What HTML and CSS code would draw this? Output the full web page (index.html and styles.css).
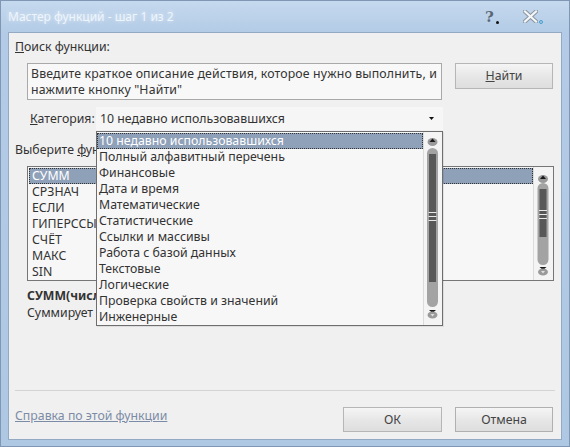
FILE: index.html
```html
<!DOCTYPE html>
<html lang="ru">
<head>
<meta charset="utf-8">
<title>Мастер функций - шаг 1 из 2</title>
<link rel="stylesheet" href="styles.css">
</head>
<body>
<div class="window">
  <div class="titlebar">
    <span class="title">Мастер функций - шаг 1 из 2</span>
    <span class="tb-help">?<i class="dot dot-dark"></i></span>
    <span class="tb-close">
      <svg width="15" height="13" viewBox="0 0 15 13"><path d="M2 1.5 L13 11.5 M13 1.5 L2 11.5" stroke="#8a96a3" stroke-width="4.2" stroke-linecap="square"/><path d="M2 1.5 L13 11.5 M13 1.5 L2 11.5" stroke="#f4f6f8" stroke-width="2.2" stroke-linecap="square"/></svg>
      <i class="dot dot-blue"></i>
    </span>
  </div>
  <div class="client">
    <div class="label"><u>П</u>оиск функции:</div>
    <div class="search-row">
      <div class="textbox">Введите краткое описание действия, которое нужно выполнить, и нажмите кнопку "Найти"</div>
      <div class="btn btn-find"><u>Н</u>айти</div>
    </div>
    <div class="cat-row">
      <span class="cat-label"><u>К</u>атегория:</span>
      <div class="combo">
        <span>10 недавно использовавшихся</span>
        <svg class="combo-arrow" width="5" height="3" viewBox="0 0 5 3"><path d="M0 0 H5 L2.5 3 Z" fill="#111"/></svg>
      </div>
    </div>
    <div class="label label-select">Выберите <u>ф</u>ункцию:</div>
    <div class="listbox funclist">
      <div class="items">
        <div class="item sel">СУММ</div>
        <div class="item">СРЗНАЧ</div>
        <div class="item">ЕСЛИ</div>
        <div class="item">ГИПЕРССЫЛКА</div>
        <div class="item">СЧЁТ</div>
        <div class="item">МАКС</div>
        <div class="item">SIN</div>
      </div>
      <svg class="vscroll" width="20" height="113" viewBox="0 0 20 113">
        <rect x="0" y="0" width="20" height="113" fill="#f4f4f4"/>
        <line x1="0.5" y1="0" x2="0.5" y2="113" stroke="#dcdcdc"/>
        <ellipse cx="10" cy="12" rx="5" ry="4" fill="#9a9a9a"/>
        <path d="M7 12 H13 L10 8.5 Z" fill="#1a1a1a"/>
        <rect x="4.5" y="16" width="11" height="82" rx="5.5" fill="#a3a3a3"/>
        <rect x="6.5" y="22" width="7" height="48" fill="#585858"/>
        <line x1="6" y1="43.5" x2="14" y2="43.5" stroke="#e8e8e8"/>
        <line x1="6" y1="47.5" x2="14" y2="47.5" stroke="#e8e8e8"/>
        <line x1="6" y1="51.5" x2="14" y2="51.5" stroke="#e8e8e8"/>
        <path d="M6.5 100 H13.5 L10 103 Z" fill="#1a1a1a"/>
        <ellipse cx="10" cy="105" rx="5" ry="3.5" fill="#9a9a9a"/>
        <path d="M8 104 H12 L10 106.5 Z" fill="#e0e0e0"/>
      </svg>
    </div>
    <div class="sig">СУММ(число1;число2;...)</div>
    <div class="desc">Суммирует аргументы.</div>
    <div class="separator"></div>
    <div class="bottom-row">
      <a class="help-link" href="#">Справка по этой функции</a>
      <div class="btn btn-ok">ОК</div>
      <div class="btn btn-cancel">Отмена</div>
    </div>
  </div>

  <div class="dropdown">
    <div class="items">
      <div class="item sel">10 недавно использовавшихся</div>
      <div class="item">Полный алфавитный перечень</div>
      <div class="item">Финансовые</div>
      <div class="item">Дата и время</div>
      <div class="item">Математические</div>
      <div class="item">Статистические</div>
      <div class="item">Ссылки и массивы</div>
      <div class="item">Работа с базой данных</div>
      <div class="item">Текстовые</div>
      <div class="item">Логические</div>
      <div class="item">Проверка свойств и значений</div>
      <div class="item">Инженерные</div>
    </div>
    <svg class="vscroll" width="19" height="193" viewBox="0 0 19 193">
      <rect x="0" y="0" width="19" height="193" fill="#f4f4f4"/>
      <line x1="0.5" y1="0" x2="0.5" y2="193" stroke="#dcdcdc"/>
      <ellipse cx="9.5" cy="10" rx="5" ry="4" fill="#9a9a9a"/>
      <path d="M6.5 10 H12.5 L9.5 6.5 Z" fill="#1a1a1a"/>
      <rect x="4" y="16" width="11" height="159" rx="5.5" fill="#a3a3a3"/>
      <rect x="6" y="22" width="7" height="128" fill="#585858"/>
      <line x1="5.5" y1="80.5" x2="13.5" y2="80.5" stroke="#e8e8e8"/>
      <line x1="5.5" y1="84.5" x2="13.5" y2="84.5" stroke="#e8e8e8"/>
      <line x1="5.5" y1="88.5" x2="13.5" y2="88.5" stroke="#e8e8e8"/>
      <path d="M6 178 H13 L9.5 181 Z" fill="#1a1a1a"/>
      <ellipse cx="9.5" cy="183" rx="5" ry="3.5" fill="#9a9a9a"/>
      <path d="M7.5 182 H11.5 L9.5 184.5 Z" fill="#e0e0e0"/>
    </svg>
  </div>
</div>
</body>
</html>
```

FILE: styles.css
```css
* { box-sizing: border-box; }
html, body { margin: 0; padding: 0; }
body {
  width: 570px;
  height: 447px;
  overflow: hidden;
  font-family: "Noto Sans", "DejaVu Sans", sans-serif;
  font-size: 12.3px;
  color: #333;
}
.window {
  position: relative;
  width: 570px;
  height: 447px;
  display: flex;
  flex-direction: column;
  background: linear-gradient(to bottom, #c5d9ee 0px, #b3cbe6 32px, #aec7e3 100%);
  border: 1px solid #7f97b4;
}
.titlebar {
  height: 31px;
  display: flex;
  align-items: center;
  padding: 0 26px 0 7px;
}
.title {
  color: #eef5fc;
  font-size: 12px;
  text-shadow: 0 0 4px rgba(255,255,255,0.6);
  flex: 1;
}
.tb-help {
  position: relative;
  font-family: "DejaVu Serif", serif;
  font-weight: bold;
  font-size: 15px;
  color: #5b6674;
  width: 38px;
  text-align: left;
}
.tb-close {
  position: relative;
  width: 20px;
  display: flex;
  align-items: center;
}
.dot {
  position: absolute;
  width: 3px;
  height: 3px;
  border-radius: 50%;
}
.dot-dark { background: #111; left: 11px; top: 13px; }
.dot-blue { border: 1px solid #3d9fcf; width: 4px; height: 4px; left: 16px; top: 10px; }
.client {
  flex: 1;
  margin: 0 7px 6px 7px;
  background: #f0f0f0;
  border: 1px solid #93a9c4;
  display: flex;
  flex-direction: column;
  padding: 6px 6px 7px 6px;
  line-height: 16px;
}
.label { height: 16px; }
.label-select { margin-top: 12px; }
.search-row {
  display: flex;
  margin-top: 8px;
  align-items: flex-start;
}
.textbox {
  margin-left: 12px;
  width: 415px;
  height: 37px;
  background: #f8f8f8;
  border: 1px solid #a9a9a9;
  padding: 2px 0 2px 3px;
  line-height: 16px;
  letter-spacing: 0.15px;
}
.btn {
  height: 25px;
  display: flex;
  align-items: center;
  justify-content: center;
  background: linear-gradient(to bottom, #f5f5f5, #e6e6e6 55%, #dedede);
  border: 1px solid #b6b6b6;
  color: #444;
}
.btn-find { margin-left: 13px; width: 98px; height: 26px; }
.cat-row {
  display: flex;
  margin-top: 7px;
  height: 23px;
  align-items: center;
  margin-left: 15px;
}
.cat-label { width: 66px; }
.combo {
  width: 347px;
  height: 23px;
  background: #f6f6f6;
  display: flex;
  align-items: center;
  padding-left: 4px;
  padding-right: 9px;
  justify-content: space-between;
}
.listbox {
  display: flex;
  background: #f7f7f7;
  border: 1px solid #767676;
}
.funclist {
  margin-top: 8px;
  margin-left: 12px;
  width: 527px;
  height: 115px;
}
.items {
  flex: 1;
  padding-top: 1px;
  padding-left: 1px;
}
.item {
  height: 16px;
  line-height: 16px;
  padding-left: 3px;
  white-space: nowrap;
}
.item.sel {
  background: #8fa1b9;
  color: #fff;
  outline: 1px dotted #333;
  outline-offset: -1px;
}
.vscroll { display: block; flex: none; }
.sig {
  margin-top: 7px;
  margin-left: 12px;
  font-weight: bold;
  height: 16px;
}
.desc {
  margin-top: 1px;
  margin-left: 12px;
  height: 16px;
}
.separator {
  margin-top: auto;
  height: 1px;
  background: #d4d4d4;
}
.bottom-row {
  margin-top: 16px;
  display: flex;
  align-items: flex-start;
  height: 25px;
}
.help-link {
  color: #7d8ca6;
  text-decoration: underline;
  margin-top: 1px;
}
.btn-ok { margin-left: auto; width: 99px; }
.btn-cancel { margin-left: 13px; margin-right: 2px; width: 98px; border-color: #b0b0b0; }
.dropdown {
  position: absolute;
  left: 95px;
  top: 130px;
  width: 347px;
  height: 195px;
  display: flex;
  background: #f7f7f7;
  border: 1px solid #6e6e6e;
  box-shadow: 1px 1px 0 rgba(0,0,0,0.08);
}
.dropdown .items { padding-left: 0; }
.dropdown .item { padding-left: 2px; }
```
